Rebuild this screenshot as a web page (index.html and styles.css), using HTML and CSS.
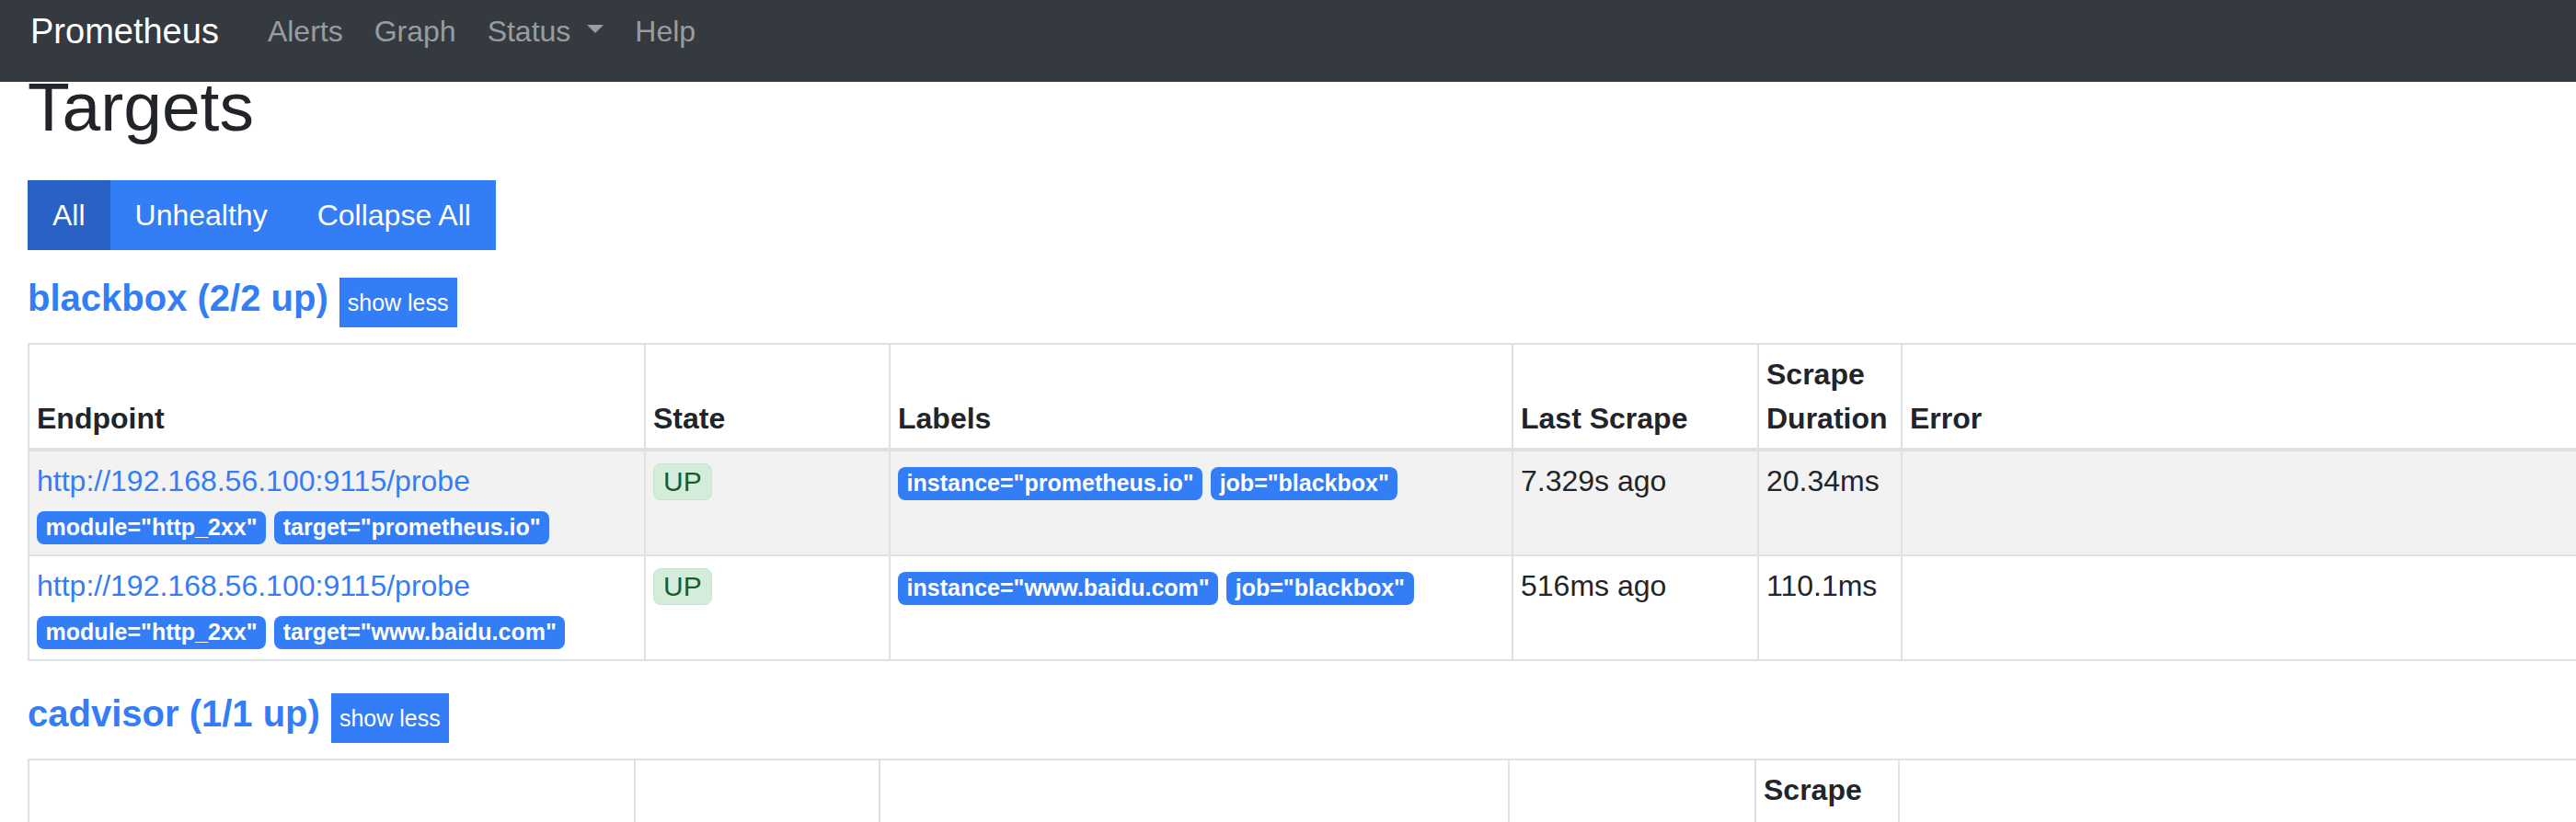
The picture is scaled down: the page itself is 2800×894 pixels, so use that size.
FILE: index.html
```html
<!DOCTYPE html>
<html lang="en">
<head>
<meta charset="utf-8">
<title>Prometheus Time Series Collection and Processing Server</title>
<link rel="stylesheet" href="styles.css">
</head>
<body>
<nav class="navbar">
  <a class="brand" href="#">Prometheus</a>
  <ul class="nav">
    <li><a class="nav-link" href="#">Alerts</a></li>
    <li><a class="nav-link" href="#">Graph</a></li>
    <li><a class="nav-link" href="#">Status<span class="caret"></span></a></li>
    <li><a class="nav-link" href="#">Help</a></li>
  </ul>
</nav>
<main class="container">
  <h1 class="page-title">Targets</h1>
  <div class="btn-group">
    <button class="btn active">All</button>
    <button class="btn">Unhealthy</button>
    <button class="btn">Collapse All</button>
  </div>

  <section class="pool">
    <div class="pool-head">
      <a class="pool-title" href="#">blackbox (2/2 up)</a>
      <button class="btn-sm">show less</button>
    </div>
    <table class="targets t1">
      <colgroup>
        <col class="c-endpoint"><col class="c-state"><col class="c-labels"><col class="c-last"><col class="c-dur"><col class="c-err">
      </colgroup>
      <thead>
        <tr><th>Endpoint</th><th>State</th><th>Labels</th><th>Last Scrape</th><th>Scrape Duration</th><th>Error</th></tr>
      </thead>
      <tbody>
        <tr class="striped">
          <td><a class="endpoint" href="#">http://192.168.56.100:9115/probe</a><br><span class="badge">module="http_2xx"</span> <span class="badge">target="prometheus.io"</span></td>
          <td><span class="state-up">UP</span></td>
          <td><span class="badge">instance="prometheus.io"</span> <span class="badge">job="blackbox"</span></td>
          <td>7.329s ago</td>
          <td>20.34ms</td>
          <td></td>
        </tr>
        <tr>
          <td><a class="endpoint" href="#">http://192.168.56.100:9115/probe</a><br><span class="badge">module="http_2xx"</span> <span class="badge">target="www.baidu.com"</span></td>
          <td><span class="state-up">UP</span></td>
          <td><span class="badge">instance="www.baidu.com"</span> <span class="badge">job="blackbox"</span></td>
          <td>516ms ago</td>
          <td>110.1ms</td>
          <td></td>
        </tr>
      </tbody>
    </table>
  </section>

  <section class="pool">
    <div class="pool-head">
      <a class="pool-title" href="#">cadvisor (1/1 up)</a>
      <button class="btn-sm">show less</button>
    </div>
    <table class="targets t2">
      <colgroup>
        <col class="c-endpoint"><col class="c-state"><col class="c-labels"><col class="c-last"><col class="c-dur"><col class="c-err">
      </colgroup>
      <thead>
        <tr><th>Endpoint</th><th>State</th><th>Labels</th><th>Last Scrape</th><th>Scrape Duration</th><th>Error</th></tr>
      </thead>
    </table>
  </section>
</main>
</body>
</html>
```

FILE: styles.css
```css
html, body {
  margin: 0;
  padding: 0;
  overflow: hidden;
  background: #ffffff;
}

body {
  font-family: "Liberation Sans", Arial, Helvetica, sans-serif;
  font-size: 32px;
  line-height: 1.5;
  color: #212529;
}

a {
  text-decoration: none;
}

/* ---------- navbar ---------- */
.navbar {
  position: fixed;
  top: 0;
  left: 0;
  right: 0;
  z-index: 10;
  height: 89px;
  background: #343a40;
  display: flex;
  align-items: flex-start;
  padding-left: 33px;
}

.brand {
  font-size: 38px;
  line-height: 1;
  margin-top: 15px;
  margin-right: 36px;
  color: #ffffff;
}

.nav {
  display: flex;
  list-style: none;
  margin: 18px 0 0;
  padding: 0;
}

.nav-link {
  display: block;
  font-size: 32px;
  line-height: 1;
  padding: 0 17px;
  color: rgba(255, 255, 255, 0.5);
}

.caret {
  display: inline-block;
  width: 0;
  height: 0;
  margin-left: 18px;
  vertical-align: 9px;
  border-top: 9px solid rgba(255, 255, 255, 0.5);
  border-left: 9px solid transparent;
  border-right: 9px solid transparent;
}

/* ---------- main ---------- */
.container {
  padding: 71px 30px 0;
}

.page-title {
  margin: 0 0 35px;
  font-size: 75px;
  font-weight: 400;
  line-height: 90px;
  color: #212529;
}

.btn-group {
  display: inline-flex;
}

.btn {
  font-family: inherit;
  font-size: 32px;
  line-height: 48px;
  padding: 12px 25px;
  border: 2px solid #337df6;
  background: #337df6;
  color: #ffffff;
  border-radius: 0;
  margin: 0;
}

.btn.active {
  background: #2962c4;
  border-color: #2860c0;
}

.pool {
  margin-top: 33px;
}

.btn-group + .pool {
  margin-top: 28px;
}

.pool-head {
  display: flex;
  align-items: baseline;
  gap: 12px;
}

.pool-title {
  font-size: 40px;
  font-weight: 700;
  line-height: 48px;
  color: #337df6;
}

.btn-sm {
  font-family: inherit;
  font-size: 25px;
  line-height: 38px;
  padding: 8px 9px;
  border: 0;
  border-radius: 0;
  background: #337df6;
  color: #ffffff;
}

/* ---------- table ---------- */
.targets {
  margin-top: 17px;
  border-collapse: collapse;
  table-layout: fixed;
  width: 2800px;
}

.targets th,
.targets td {
  border: 2px solid #dee2e6;
  padding: 8px;
  text-align: left;
  vertical-align: top;
}

.targets thead th {
  vertical-align: bottom;
  border-bottom-width: 4px;
  font-weight: 700;
}

.targets .striped td {
  background: #f2f2f2;
}

.t1 .c-endpoint { width: 670px; }
.t1 .c-state { width: 266px; }
.t1 .c-labels { width: 677px; }
.t1 .c-last { width: 267px; }
.t1 .c-dur { width: 156px; }
.t1 .c-err { width: 764px; }

.t2 .c-endpoint { width: 659px; }
.t2 .c-state { width: 266px; }
.t2 .c-labels { width: 684px; }
.t2 .c-last { width: 268px; }
.t2 .c-dur { width: 156px; }
.t2 .c-err { width: 767px; }

.endpoint {
  color: #337df6;
}

.badge {
  display: inline-block;
  font-size: 25px;
  font-weight: 700;
  line-height: 1;
  padding: 5.5px 9.6px;
  border-radius: 8px;
  background: #337df6;
  color: #ffffff;
  white-space: nowrap;
}

.state-up {
  display: inline-block;
  font-size: 30px;
  line-height: 30px;
  padding: 4px 10px;
  border: 1px solid #c3e6cb;
  border-radius: 8px;
  background: #d4edda;
  color: #1f5a2c;
}
```
